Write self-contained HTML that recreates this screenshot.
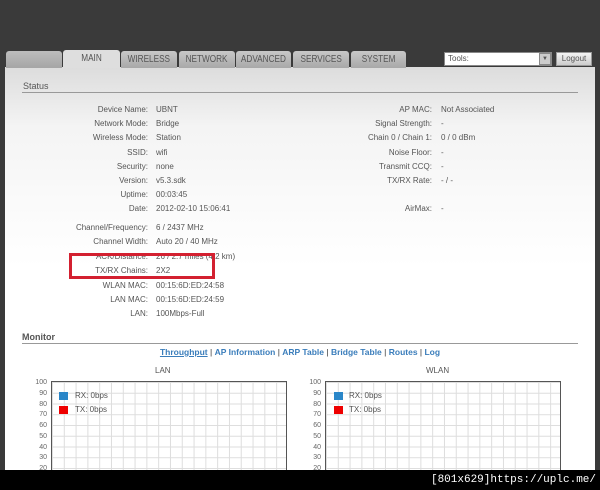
<!DOCTYPE html>
<html><head><style>
*{margin:0;padding:0;box-sizing:border-box}
body{width:600px;height:490px;overflow:hidden;background:#3a3a3a;font-family:"Liberation Sans",sans-serif;font-size:8px;color:#555;position:relative}
.panel{position:absolute;left:5px;top:67px;width:590px;height:410px;background:linear-gradient(#dcdcdc,#f4f4f4 60px,#fff 200px,#fff);}
.tab{position:absolute;top:51px;height:17px;background:linear-gradient(#c8c8c8,#a8a8a8);border-radius:3px 3px 0 0;color:#555;font-size:10px;text-align:center;line-height:17px;overflow:hidden}
.tab span{display:inline-block;transform:scaleX(.82)}
.tab.act{background:#dedede;top:50px;height:18px}
h2{position:absolute;font-size:9px;color:#555;font-weight:normal}
.hr{position:absolute;left:22px;height:1px;background:#999}
.l{position:absolute;width:150px;text-align:right}
.v{position:absolute}
.bar{position:absolute;left:0;top:470px;width:600px;height:20px;background:#000;color:#fff;font-family:"Liberation Mono",monospace;font-size:11px;text-align:right;padding-right:4px;line-height:20px}
.chart{position:absolute;top:381px;width:236px;height:100px;border:1px solid #555;border-bottom:none;background-color:#fff;background-image:linear-gradient(90deg,#ddd 1px,transparent 1px),linear-gradient(#ddd 1px,transparent 1px);background-size:11.8px 10.75px}
.ax{position:absolute;width:17px;text-align:right;font-size:7px;color:#666}
a{color:#3a7dbb;text-decoration:none;font-weight:bold}
</style></head><body>
<div class="panel"></div>
<div class="tab" style="left:6px;width:56px;background:linear-gradient(#bdbdbd,#a5a5a5)"></div>
<div class="tab act" style="left:63px;width:57px"><span>MAIN</span></div>
<div class="tab" style="left:121px;width:56px"><span>WIRELESS</span></div>
<div class="tab" style="left:179px;width:56px"><span>NETWORK</span></div>
<div class="tab" style="left:236px;width:55px"><span>ADVANCED</span></div>
<div class="tab" style="left:293px;width:56px"><span>SERVICES</span></div>
<div class="tab" style="left:351px;width:55px"><span>SYSTEM</span></div>
<div style="position:absolute;left:444px;top:52px;width:108px;height:14px;background:#fff;border:1px solid #888;font-size:8px;line-height:12px;padding-left:3px">Tools:</div>
<div style="position:absolute;left:539px;top:53px;width:12px;height:12px;background:#ccc;border:1px solid #888;font-size:6px;text-align:center;line-height:11px">▼</div>
<div style="position:absolute;left:556px;top:52px;width:36px;height:14px;background:linear-gradient(#f4f4f4,#ccc);border:1px solid #999;font-size:8px;text-align:center;line-height:12px">Logout</div>
<h2 style="left:23px;top:81px">Status</h2>
<div class="hr" style="top:92px;width:556px"></div>
<div class="l" style="left:-2px;top:103px;line-height:14.2px">Device Name:<br>Network Mode:<br>Wireless Mode:<br>SSID:<br>Security:<br>Version:<br>Uptime:<br>Date:</div>
<div class="v" style="left:156px;top:103px;line-height:14.2px">UBNT<br>Bridge<br>Station<br>wifi<br>none<br>v5.3.sdk<br>00:03:45<br>2012-02-10 15:06:41</div>
<div class="l" style="left:-2px;top:221px;line-height:14.4px">Channel/Frequency:<br>Channel Width:<br>ACK/Distance:<br>TX/RX Chains:<br>WLAN MAC:<br>LAN MAC:<br>LAN:</div>
<div class="v" style="left:156px;top:221px;line-height:14.4px">6 / 2437 MHz<br>Auto 20 / 40 MHz<br>26 / 2.7 miles (4.2 km)<br>2X2<br>00:15:6D:ED:24:58<br>00:15:6D:ED:24:59<br>100Mbps-Full</div>
<div style="position:absolute;left:69px;top:253px;width:146px;height:26px;border:3px solid #d32030"></div>
<div class="l" style="left:282px;top:103px;line-height:14.2px">AP MAC:<br>Signal Strength:<br>Chain 0 / Chain 1:<br>Noise Floor:<br>Transmit CCQ:<br>TX/RX Rate:<br><br>AirMax:</div>
<div class="v" style="left:441px;top:103px;line-height:14.2px">Not Associated<br>-<br>0 / 0 dBm<br>-<br>-<br>- / -<br><br>-</div>
<h2 style="left:22px;top:332px;font-weight:bold">Monitor</h2>
<div class="hr" style="top:343px;width:556px"></div>
<div style="position:absolute;left:0;width:600px;top:347px;text-align:center;font-size:8.5px;color:#333"><a style="text-decoration:underline">Throughput</a> | <a>AP Information</a> | <a>ARP Table</a> | <a>Bridge Table</a> | <a>Routes</a> | <a>Log</a></div>
<div style="position:absolute;left:155px;top:366px">LAN</div>
<div style="position:absolute;left:426px;top:366px">WLAN</div>
<div class="chart" style="left:51px"></div>
<div class="chart" style="left:325px"></div>
<div class="ax" style="left:30px;top:378px;line-height:10.75px">100<br>90<br>80<br>70<br>60<br>50<br>40<br>30<br>20</div>
<div class="ax" style="left:304px;top:378px;line-height:10.75px">100<br>90<br>80<br>70<br>60<br>50<br>40<br>30<br>20</div>
<div style="position:absolute;left:59px;top:392px;width:9px;height:8px;background:#2a86c8"></div><div class="v" style="left:75px;top:391px">RX: 0bps</div>
<div style="position:absolute;left:59px;top:406px;width:9px;height:8px;background:#e00"></div><div class="v" style="left:75px;top:405px">TX: 0bps</div>
<div style="position:absolute;left:334px;top:392px;width:9px;height:8px;background:#2a86c8"></div><div class="v" style="left:349px;top:391px">RX: 0bps</div>
<div style="position:absolute;left:334px;top:406px;width:9px;height:8px;background:#e00"></div><div class="v" style="left:349px;top:405px">TX: 0bps</div>
<div class="bar">[801x629]https://uplc.me/</div>
</body></html>
